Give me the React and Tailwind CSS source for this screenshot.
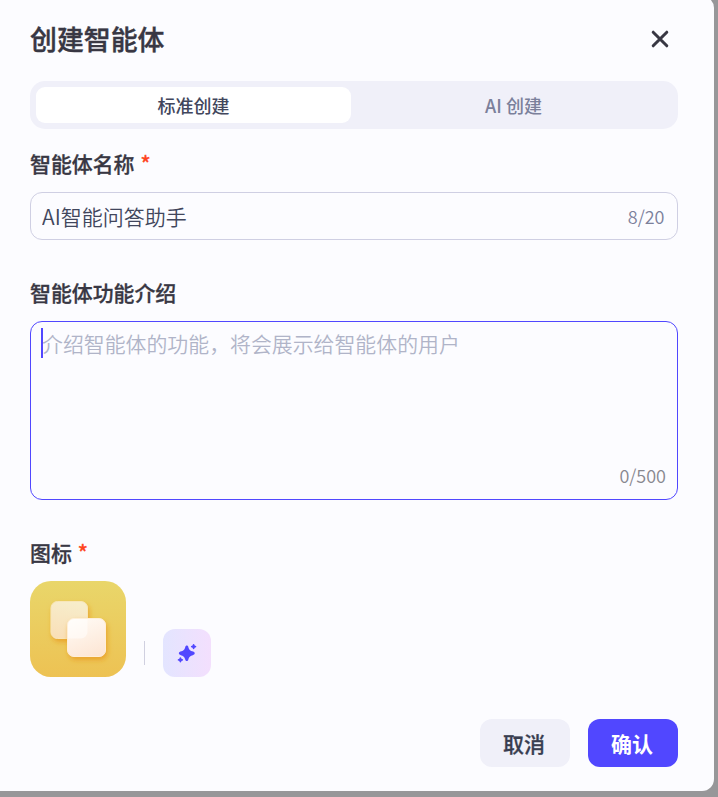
import React, { useState } from "react";

const RequiredMark = () => <span className="ml-1.5 text-[#ff441e]">*</span>;

const SparkleIcon = () => (
  <svg width="20" height="20" viewBox="0 0 20 20" fill="#5147ff">
    <path d="M9.800 2.600c.8 0 1.300.6 1.500 1.300.8 2.800 1.700 3.700 4.900 4.700 2.100.7 2.100 2.700 0 3.400-3.200 1-4.100 2-4.900 4.800-.4 1.700-2.600 1.700-3 0-.8-2.800-1.700-3.800-4.900-4.800-2.100-.7-2.100-2.700 0-3.400 3.200-1 4.100-1.900 4.900-4.700.2-.7.700-1.300 1.500-1.300z" />
    <path d="M16.600 1c.5 0 .8.400.9 1 .1.400.3.600.7.700 1.500.3 1.500 1.500 0 1.800-.4.100-.6.300-.7.700-.3 1.400-1.500 1.400-1.800 0-.1-.4-.3-.6-.7-.7-1.500-.3-1.500-1.500 0-1.800.4-.1.600-.3.700-.7.100-.6.400-1 .9-1z" />
    <path d="M3.400 14.300c.5 0 .8.400.9 1 .1.400.3.600.7.700 1.500.3 1.500 1.500 0 1.800-.4.100-.6.300-.7.700-.3 1.400-1.500 1.400-1.800 0-.1-.4-.3-.6-.7-.7-1.500-.3-1.500-1.500 0-1.800.4-.1.600-.3.700-.7.100-.6.400-1 .9-1z" />
  </svg>
);

const AgentIcon = () => (
  <svg width="96" height="96" viewBox="0 0 96 96" className="rounded-[21px]">
    <defs>
      <linearGradient id="tile" x1="0" y1="0" x2="0" y2="1">
        <stop offset="0" stopColor="#e9d66a" />
        <stop offset="1" stopColor="#edc253" />
      </linearGradient>
      <linearGradient id="back" x1="0.5" y1="0" x2="0.3" y2="1">
        <stop offset="0" stopColor="#f7edcb" />
        <stop offset="1" stopColor="#f9dfb8" />
      </linearGradient>
      <linearGradient id="front" x1="0.3" y1="0" x2="0.7" y2="1">
        <stop offset="0" stopColor="#fffaf4" />
        <stop offset="1" stopColor="#fde6d5" />
      </linearGradient>
      <filter id="shadow" x="-40%" y="-40%" width="180%" height="180%">
        <feDropShadow dx="1.5" dy="3" stdDeviation="2.500" floodColor="#e9951b" floodOpacity="0.7" />
      </filter>
    </defs>
    <rect width="96" height="96" fill="url(#tile)" />
    <rect x="21" y="20.500" width="36.500" height="37" rx="6.500" fill="url(#back)" stroke="#f8e6b8" filter="url(#shadow)" />
    <rect x="37.500" y="37.500" width="38" height="38" rx="6.500" fill="url(#front)" stroke="#ffefd8" filter="url(#shadow)" />
    <path d="M44 38h13.500v13a6.500 6.500 0 0 1-6.500 6.500H38V44a6 6 0 0 1 6-6z" fill="#ffffff" fillOpacity="0.5" />
  </svg>
);

const App = () => {
  const [tab, setTab] = useState("standard");
  const [name, setName] = useState("AI智能问答助手");
  const [intro, setIntro] = useState("");

  return (
    <div className="h-[797px] w-[718px] overflow-hidden bg-[#979799] font-['Noto_Sans_CJK_SC',sans-serif] text-[#383743]">
      <div className="-mt-1 flex h-[795px] w-[714px] flex-col rounded-r-xl bg-[#fcfcff] pt-[23px] pr-9 pl-[30px]">
        {/* Header */}
        <div className="flex h-10 items-center justify-between">
          <h2 className="text-[26.900px] leading-10 font-medium [-webkit-text-stroke:0.4px]">创建智能体</h2>
          <button className="mr-[9px]" aria-label="关闭">
            <svg width="18" height="18" viewBox="0 0 18 18" fill="none" stroke="#383743" strokeWidth="3" strokeLinecap="round">
              <path d="M2.200 2.200l13.600 13.600M15.800 2.200L2.200 15.800" />
            </svg>
          </button>
        </div>

        {/* Tabs */}
        <div className="mt-[22px] flex h-12 shrink-0 rounded-[15px] bg-[#f0f0f9] p-1.5">
          <button
            onClick={() => setTab("standard")}
            className={`w-[315px] rounded-[9px] text-lg leading-9 font-medium ${tab === "standard" ? "bg-white text-[#41465c]" : "text-[#7b809b]"}`}
          >
            标准创建
          </button>
          <button
            onClick={() => setTab("ai")}
            className={`ml-1 flex-1 rounded-[9px] text-lg leading-9 font-medium ${tab === "ai" ? "bg-white text-[#41465c]" : "text-[#7b809b]"}`}
          >
            AI 创建
          </button>
        </div>

        {/* Name */}
        <label className="mt-[19px] text-[20.900px] leading-[30px] font-medium [-webkit-text-stroke:0.3px]">
          智能体名称
          <RequiredMark />
        </label>
        <div className="mt-3.5 flex h-12 shrink-0 items-center rounded-xl border border-[#cfcfe3] pr-[12.500px] pl-[11px]">
          <input
            value={name}
            maxLength={20}
            onChange={(e) => setName(e.target.value)}
            className="min-w-0 flex-1 bg-transparent text-[21px] leading-[30px] font-[350] text-[#41465c] outline-none"
          />
          <span className="text-lg leading-[30px] font-[350] text-[#7b809b]">{name.length}/20</span>
        </div>

        {/* Introduction */}
        <label className="mt-[37px] text-[20.900px] leading-[30px] font-medium [-webkit-text-stroke:0.3px]">智能体功能介绍</label>
        <div className="relative mt-3.5 flex h-[179px] shrink-0 flex-col rounded-xl border border-[#5147ff] px-[11px] pt-1.5 pb-[9px]">
          <textarea
            value={intro}
            maxLength={500}
            onChange={(e) => setIntro(e.target.value)}
            placeholder="介绍智能体的功能，将会展示给智能体的用户"
            className="min-h-0 w-full flex-1 resize-none bg-transparent text-[20.900px] leading-[30px] font-[350] outline-none placeholder:text-[#b0b4c8]"
          />
          {intro === "" && <span className="absolute top-1.5 left-2.5 h-[30px] w-0.5 bg-[#5147ff]" />}
          <span className="self-end text-lg leading-[30px] font-[350] text-[#88888f]">{intro.length}/500</span>
        </div>

        {/* Icon */}
        <label className="mt-[37px] text-[20.900px] leading-[30px] font-medium [-webkit-text-stroke:0.3px]">
          图标
          <RequiredMark />
        </label>
        <div className="mt-3.5 flex items-end">
          <AgentIcon />
          <div className="mb-3 ml-[18px] h-6 w-px bg-[#d0d0e0]" />
          <button className="ml-[18px] flex size-12 items-center justify-center rounded-xl bg-linear-to-r from-[#e3e5ff] to-[#f3dffd]">
            <SparkleIcon />
          </button>
        </div>

        {/* Footer */}
        <div className="mt-[42px] flex shrink-0 justify-end gap-[18px]">
          <button className="h-12 w-[90px] rounded-xl bg-[#f0f0f9] pr-0.5 text-[21px] leading-[30px] font-medium text-[#383d50] [-webkit-text-stroke:0.3px]">取消</button>
          <button className="h-12 w-[90px] rounded-xl bg-[#5147ff] pr-0.5 text-[21px] leading-[30px] font-bold text-white">确认</button>
        </div>
      </div>
    </div>
  );
};

export default App;
